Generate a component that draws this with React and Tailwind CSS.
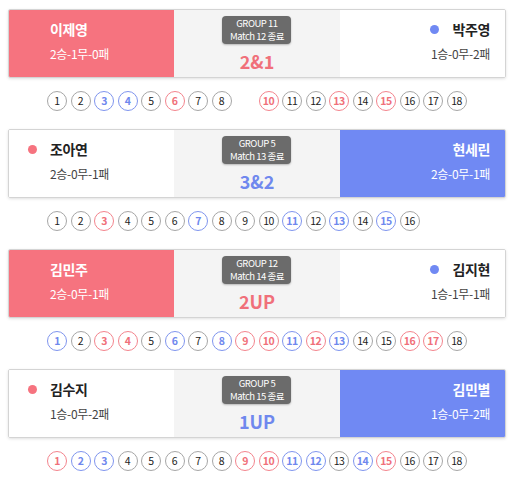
const RED = "#f6737f";
const BLUE = "#7089f3";

// g = 무승부(회색), r = 왼쪽 승, b = 오른쪽 승, x = 미표시
const matches = [
  {
    group: "GROUP 11",
    match: "Match 12 종료",
    score: "2&1",
    winner: "left",
    left: { name: "이제영", record: "2승-1무-0패" },
    right: { name: "박주영", record: "1승-0무-2패" },
    holes: "ggbbgrggxrggrgrggg",
  },
  {
    group: "GROUP 5",
    match: "Match 13 종료",
    score: "3&2",
    winner: "right",
    left: { name: "조아연", record: "2승-0무-1패" },
    right: { name: "현세린", record: "2승-0무-1패" },
    holes: "ggrgggbgggbgbgbg",
  },
  {
    group: "GROUP 12",
    match: "Match 14 종료",
    score: "2UP",
    winner: "left",
    left: { name: "김민주", record: "2승-0무-1패" },
    right: { name: "김지현", record: "1승-1무-1패" },
    holes: "bgrrgbgbrrbrbggrrg",
  },
  {
    group: "GROUP 5",
    match: "Match 15 종료",
    score: "1UP",
    winner: "right",
    left: { name: "김수지", record: "1승-0무-2패" },
    right: { name: "김민별", record: "1승-0무-2패" },
    holes: "rbbgggggrrbbgbrggg",
  },
];

function Player({ player, side, won }) {
  const isLeft = side === "left";
  const dotColor = isLeft ? RED : BLUE;
  const panelBg = won ? (isLeft ? "bg-[#f6737f]" : "bg-[#7089f3]") : "bg-white";
  const textColor = won ? "text-white" : "text-[#222]";
  const subColor = won ? "text-white" : "text-[#444]";

  return (
    <div
      className={`flex items-center ${panelBg} ${
        isLeft ? "pl-[19px]" : "justify-end pr-[15px]"
      }`}
    >
      <div className={`flex flex-col ${isLeft ? "items-start" : "items-end"} -mt-[5px]`}>
        <div className="flex items-center gap-[13px] h-[20px]">
          {!won && (
            <span
              className="w-[9px] h-[9px] rounded-full"
              style={{ backgroundColor: dotColor }}
            />
          )}
          <span
            className={`text-[14px] font-bold tracking-tight ${textColor} ${
              won && isLeft ? "pl-[22px]" : ""
            }`}
          >
            {player.name}
          </span>
        </div>
        <div
          className={`mt-[5px] text-[12px] tracking-tight ${subColor} ${
            isLeft ? "pl-[22px]" : ""
          }`}
        >
          {player.record}
        </div>
      </div>
    </div>
  );
}

function Hole({ n, kind }) {
  const styles = {
    g: "border-[#a6a6a6] text-[#222]",
    r: "border-[#f3848d] text-[#f0707a] font-bold",
    b: "border-[#7f95ee] text-[#6f88ee] font-bold",
    x: "invisible",
  };
  return (
    <div
      className={`w-5 h-5 shrink-0 rounded-full border flex items-center justify-center text-[10.5px] tracking-tighter bg-white ${styles[kind]}`}
    >
      {n}
    </div>
  );
}

function MatchCard({ m }) {
  return (
    <div className="mb-[18px]">
      <div className="grid grid-cols-3 h-[69px] w-[498px] border border-[#d4d4d4] rounded-[2px] shadow-[0_1px_3px_rgba(0,0,0,0.12)] overflow-hidden">
        <Player player={m.left} side="left" won={m.winner === "left"} />
        <div className="bg-[#f4f4f4] flex flex-col items-center pt-[6px]">
          <div className="w-[69px] h-[28px] rounded-[4px] bg-[#6b6b6b] shadow-[0_1px_2px_rgba(0,0,0,0.25)] flex flex-col items-center justify-center text-white text-[9.5px] leading-[13px] tracking-tighter">
            <div>{m.group}</div>
            <div>{m.match}</div>
          </div>
          <div
            className={`mt-[7px] text-[18px] font-bold leading-[20px] ${
              m.winner === "left" ? "text-[#f0707a]" : "text-[#6f88ee]"
            }`}
          >
            {m.score}
          </div>
        </div>
        <Player player={m.right} side="right" won={m.winner === "right"} />
      </div>
      <div className="flex gap-[3.5px] mt-[13px] pl-[39px]">
        {m.holes.split("").map((k, i) => (
          <Hole key={i} n={i + 1} kind={k} />
        ))}
      </div>
    </div>
  );
}

export default function App() {
  return (
    <div
      className="w-[509px] h-[479px] bg-white pt-[9px] pl-2 overflow-hidden"
      style={{ fontFamily: '"Noto Sans CJK KR", "Noto Sans", sans-serif' }}
    >
      {matches.map((m, i) => (
        <MatchCard key={i} m={m} />
      ))}
    </div>
  );
}
